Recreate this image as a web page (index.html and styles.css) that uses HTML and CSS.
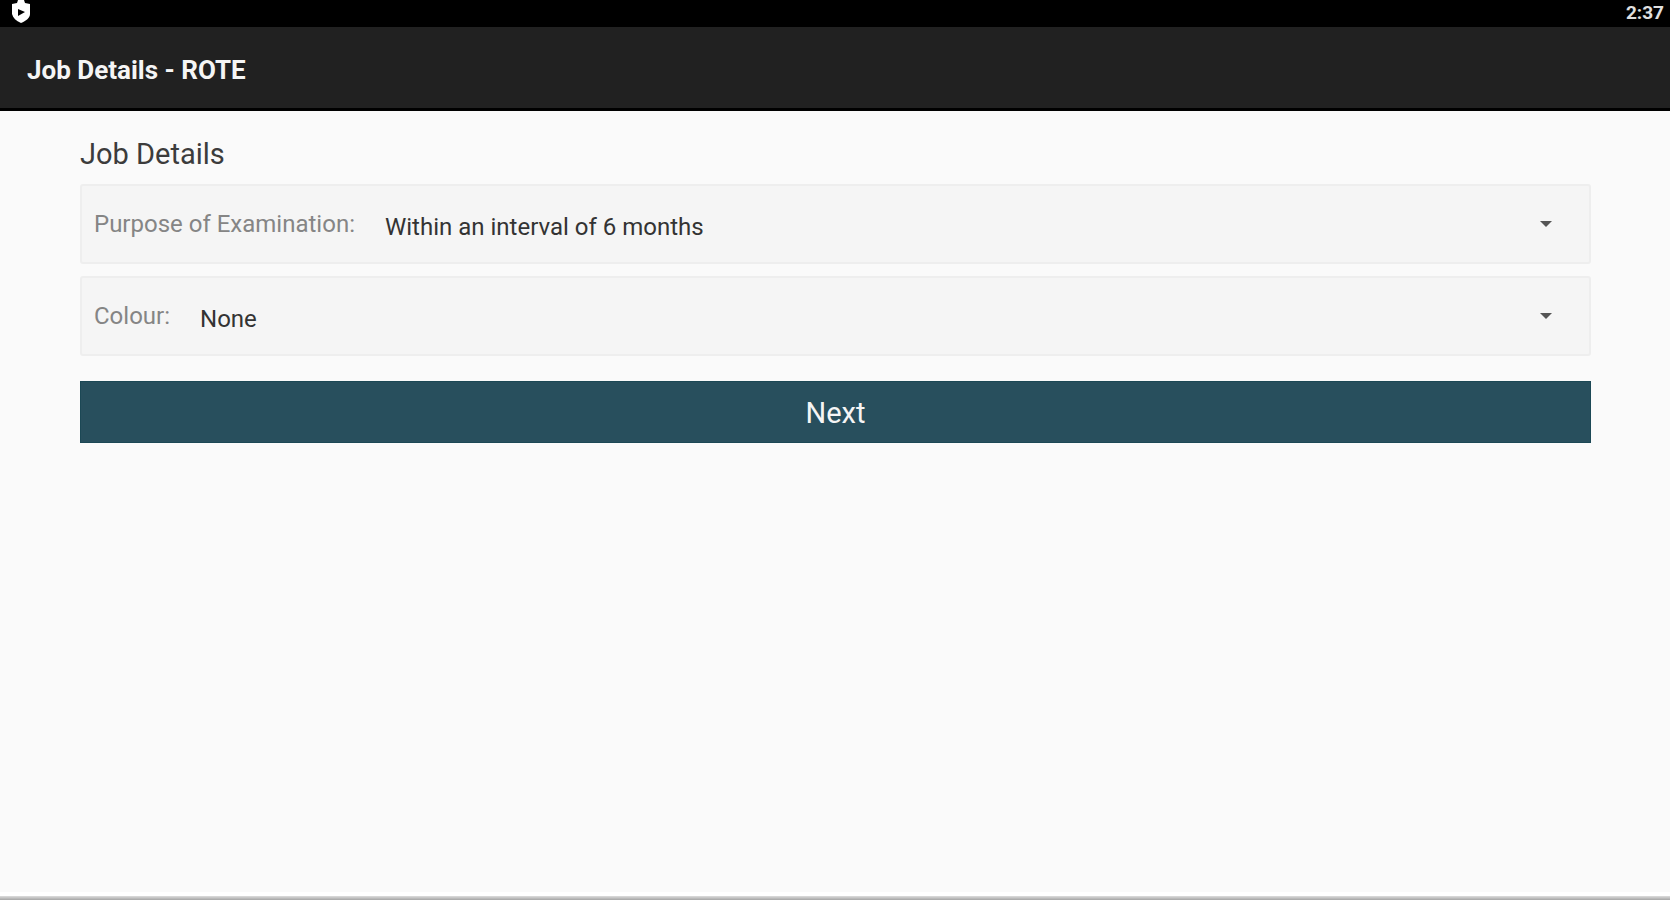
FILE: index.html
```html
<!DOCTYPE html>
<html lang="en">
<head>
<meta charset="utf-8">
<title>Job Details - ROTE</title>
<link rel="stylesheet" href="styles.css">
</head>
<body>
<div class="status">
  <svg class="shield" viewBox="0 0 20 23" aria-hidden="true">
    <path fill="#fff" d="M7 0h6l1 3 5 1v10c0 4-4 7-9 9-5-2-8-5-9-9V4l5-1z"/>
    <path fill="#000" d="M7 9l7 3-7 4z"/>
  </svg>
  <time class="clock">2:37</time>
</div>
<header class="appbar"><h1 class="appbar-title">Job Details - ROTE</h1></header>
<main class="content">
  <h2 class="section-title">Job Details</h2>
  <form class="form">
    <div class="field">
      <label class="label" for="purpose">Purpose of Examination:</label>
      <select class="select" id="purpose"><option>Within an interval of 6 months</option></select>
      <svg class="arrow" viewBox="0 0 12 6" aria-hidden="true"><path d="M0 0h12L6 6z"/></svg>
    </div>
    <div class="field">
      <label class="label" for="colour">Colour:</label>
      <select class="select" id="colour"><option>None</option></select>
      <svg class="arrow" viewBox="0 0 12 6" aria-hidden="true"><path d="M0 0h12L6 6z"/></svg>
    </div>
    <button class="next" type="button">Next</button>
  </form>
</main>
<footer class="bottom-edge"></footer>
</body>
</html>
```
FILE: styles.css
```css
* {
  box-sizing: border-box;
}

body {
  margin: 0;
  min-height: 100vh;
  display: flex;
  flex-direction: column;
  background: #fafafa;
  font-family: Roboto, "Liberation Sans", sans-serif;
}

.status {
  display: flex;
  justify-content: space-between;
  align-items: flex-start;
  height: 27px;
  padding: 0 6px 0 11px;
  background: #000;
  color: #e0e0e0;
}

.shield {
  width: 20px;
  height: 23px;
}

.clock {
  font-size: 19px;
  font-weight: 700;
  line-height: 26px;
}

.appbar {
  display: flex;
  align-items: center;
  height: 84px;
  padding: 4px 27px 0;
  background: #212121;
  border-bottom: 3px solid #000;
}

.appbar-title {
  margin: 0;
  color: #f5f5f5;
  font-size: 26px;
  font-weight: 700;
  line-height: 32px;
}

.content {
  flex: 1;
  padding: 25px 79px 0 80px;
}

.section-title {
  margin: 0 0 12px;
  color: #3c3c3c;
  font-size: 29px;
  font-weight: 400;
  line-height: 36px;
}

.form {
  display: flex;
  flex-direction: column;
  gap: 12px;
}

.field {
  position: relative;
  display: flex;
  align-items: center;
  height: 80px;
  padding: 0 12px;
  background: #f5f5f5;
  border: 2px solid #eee;
  border-radius: 3px;
}

.label {
  color: #858585;
  font-size: 24px;
  line-height: 32px;
}

.select {
  flex: 1;
  align-self: stretch;
  padding: 6px 48px 0 30px;
  appearance: none;
  border: 0;
  background: transparent;
  color: #333;
  font-family: inherit;
  font-size: 24px;
}

.arrow {
  position: absolute;
  right: 37px;
  top: 35px;
  width: 12px;
  height: 6px;
  fill: #555;
  pointer-events: none;
}

.next {
  height: 62px;
  margin-top: 13px;
  padding: 2px 0 0;
  border: 1px solid #1c4855;
  background: #284f5d;
  color: #f5f5f5;
  font-family: inherit;
  font-size: 29px;
}

.bottom-edge {
  height: 8px;
  border-top: 4px solid #fff;
  background: linear-gradient(#ddd, #a5a5a5);
}
```
